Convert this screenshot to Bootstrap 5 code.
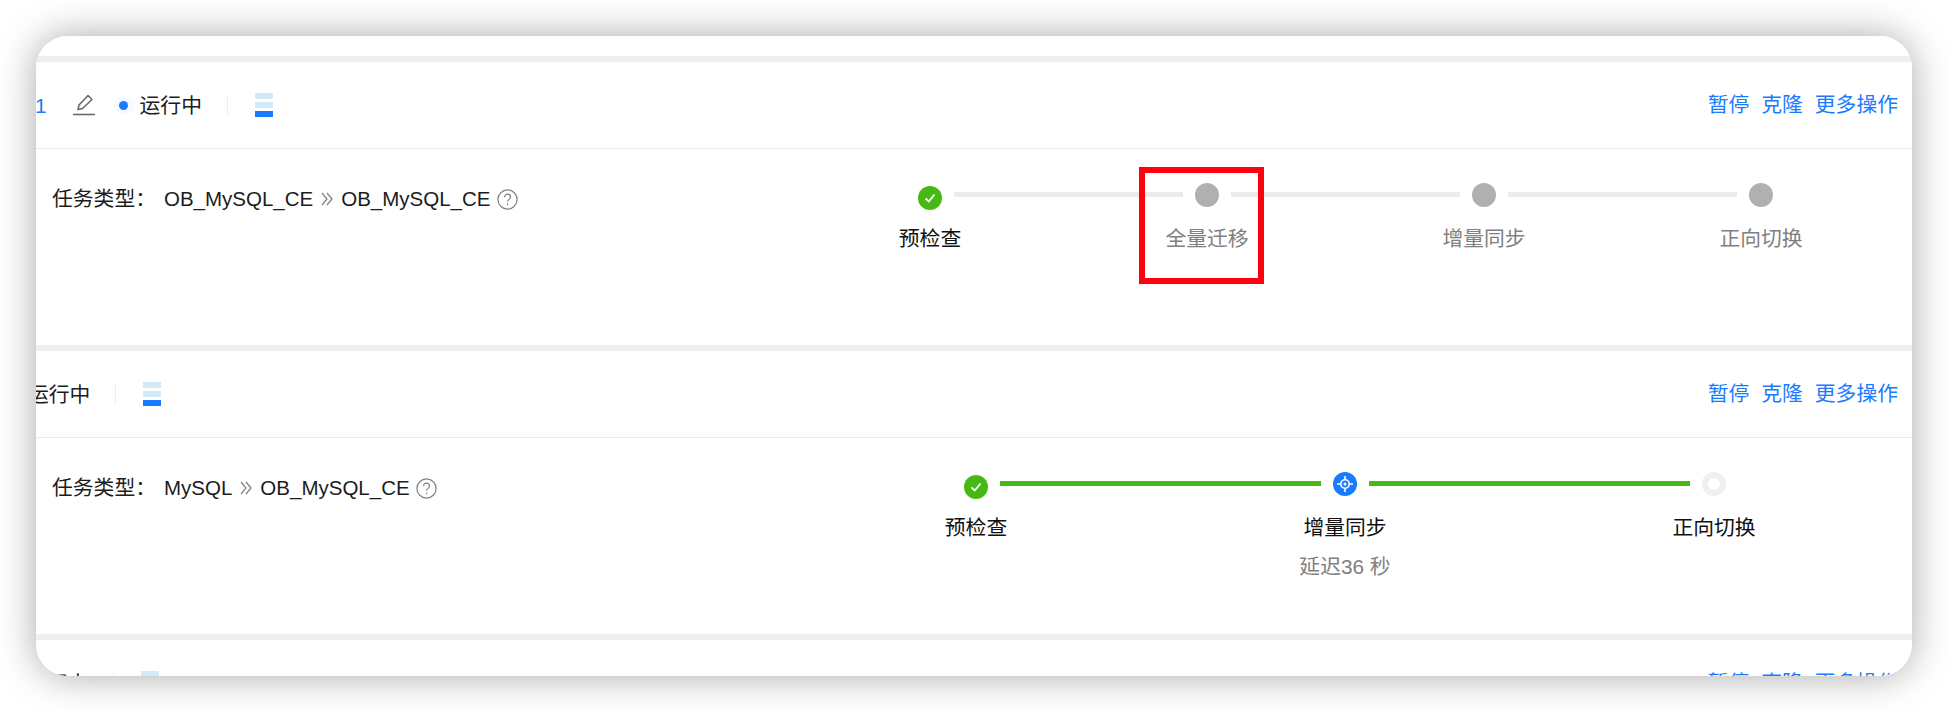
<!DOCTYPE html>
<html lang="zh-CN">
<head>
    <meta charset="UTF-8">
    <title>迁移任务列表</title>
    <meta name="viewport" content="width=device-width, initial-scale=1">
    <link href="https://cdn.jsdelivr.net/npm/bootstrap@5.3.0/dist/css/bootstrap.min.css" rel="stylesheet">
    <style>
        html, body { height: 100%; overflow: hidden; background: #fff; }
        body { font-family: "Liberation Sans", "Noto Sans CJK SC", sans-serif; font-size: 20.8px; line-height: 28px; color: #1c1c1c; padding: 36px 36px 0; }
        .shot-window { position: relative; height: 640px; padding-top: 20px; overflow: hidden; background: #fff; border-radius: 32px; }
        .shot-shadow { border-radius: 32px; box-shadow: 0 0 38px rgba(0,0,0,.34); }
        .job-band { height: 6px; background: #eeeff3; }
        .job-head { height: 87px; padding-right: 14px; border-bottom: 1px solid #ebebeb; }
        .job-body { height: 196px; }
        .job-info { padding: 36px 0 0 16px; }
        .job-label { width: 112px; }
        .db-name { font-size: 20.5px; }
        .head-text { padding-top: 2px; }
        .job-id { margin-left: -1px; margin-right: 25px; color: #1a7bff; }
        .edit-icon { width: 24px; height: 24px; margin-right: 18px; flex: none; }
        .status-dot { width: 20px; height: 20px; margin-right: 6px; border-radius: 50%; background: #f7faff; flex: none; }
        .status-dot::after { content: ""; display: block; width: 9px; height: 9px; margin: 5.5px; border-radius: 50%; background: #1a7bff; }
        .head-clip { margin-left: -8px; }
        .head-shift { margin-left: -10px; }
        .head-rule { width: 1px; height: 20px; margin: 0 27px 0 25px; background: #ececec; }
        .db-bars { width: 18px; gap: 3px; }
        .db-bars i { display: block; height: 6px; background: #d3e9f6; }
        .db-bars i:last-child { background: #1a7bff; }
        .job-actions { gap: 12px; color: #1a7bff; }
        .flow-mark { width: 12px; height: 14px; margin: 0 8px; flex: none; }
        .help-icon { width: 21px; height: 21px; margin-left: 6px; flex: none; }
        .steps-four { width: 855px; margin: 34px 139px 0 auto; }
        .steps-three { width: 762px; margin: 34px 186px 0 auto; }
        .step-node { width: 24px; flex: none; }
        .step-dot { width: 24px; height: 24px; border-radius: 50%; flex: none; }
        .step-done { background: #47b915; transform: translateY(3px); }
        .step-live { background: #1a7bff; }
        .step-wait { background: #b0b0b0; }
        .step-idle { border: 6px solid #f0f0f0; background: #fff; }
        .step-label { margin-top: 18px; color: #111; white-space: nowrap; }
        .step-muted { color: #808080; }
        .step-note { margin-top: 11px; color: #808080; white-space: nowrap; }
        .step-line { height: 5px; margin: 9px 12px 0; background: #ececec; }
        .step-line-ok { background: #47b915; }
        .red-frame { position: absolute; left: 1103px; top: 131px; width: 125px; height: 117px; border: 6px solid #ff0010; }
    </style>
</head>
<body>

<div class="shot-shadow">
<div class="shot-window">

    <div class="job-band"></div>
    <div class="job-head d-flex align-items-center">
        <span class="job-id head-text">1</span>
        <svg class="edit-icon" viewBox="0 0 24 24" fill="none" stroke="#666" stroke-width="1.5">
            <path d="M6 16.5 7 12 16 2.5 20 6.5 10.5 15.5Z" stroke-linejoin="round"/>
            <path d="M1 21.5H23"/>
        </svg>
        <span class="status-dot"></span>
        <span class="head-text">运行中</span>
        <span class="head-rule"></span>
        <span class="db-bars d-flex flex-column"><i></i><i></i><i></i></span>
        <span class="job-actions d-flex ms-auto"><span>暂停</span><span>克隆</span><span>更多操作</span></span>
    </div>
    <div class="job-body d-flex align-items-start">
        <div class="job-info d-flex">
            <span class="job-label">任务类型：</span>
            <span class="db-name">OB_MySQL_CE</span>
            <svg class="flow-mark align-self-center" viewBox="0 0 12 14" fill="none" stroke="#808080" stroke-width="1.2"><path d="M1 1l5 6-5 6M6 1l5 6-5 6"/></svg>
            <span class="db-name">OB_MySQL_CE</span>
            <svg class="help-icon align-self-center" viewBox="0 0 21 21" fill="none" stroke="#808080" stroke-width="1.2"><circle cx="10.5" cy="10.5" r="9.6"/><path d="M7.5 8.2c0-4 6-4 6 0 0 2.2-3 2.2-3 4.6"/><path d="M10.5 14.6v1.6"/></svg>
        </div>
        <div class="steps-four d-flex align-items-start">
            <div class="step-node d-flex flex-column align-items-center">
                <span class="step-dot step-done d-flex align-items-center justify-content-center">
                    <svg width="14" height="14" viewBox="0 0 14 14" fill="none" stroke="#fff" stroke-width="1.8"><path d="M2.5 7.5 5.8 10.5 11.5 3.5"/></svg>
                </span>
                <span class="step-label">预检查</span>
            </div>
            <div class="step-line flex-grow-1"></div>
            <div class="step-node d-flex flex-column align-items-center">
                <span class="step-dot step-wait"></span>
                <span class="step-label step-muted">全量迁移</span>
            </div>
            <div class="step-line flex-grow-1"></div>
            <div class="step-node d-flex flex-column align-items-center">
                <span class="step-dot step-wait"></span>
                <span class="step-label step-muted">增量同步</span>
            </div>
            <div class="step-line flex-grow-1"></div>
            <div class="step-node d-flex flex-column align-items-center">
                <span class="step-dot step-wait"></span>
                <span class="step-label step-muted">正向切换</span>
            </div>
        </div>
    </div>

    <div class="job-band"></div>
    <div class="job-head d-flex align-items-center">
        <span class="head-clip head-text">运行中</span>
        <span class="head-rule"></span>
        <span class="db-bars d-flex flex-column"><i></i><i></i><i></i></span>
        <span class="job-actions d-flex ms-auto"><span>暂停</span><span>克隆</span><span>更多操作</span></span>
    </div>
    <div class="job-body d-flex align-items-start">
        <div class="job-info d-flex">
            <span class="job-label">任务类型：</span>
            <span class="db-name">MySQL</span>
            <svg class="flow-mark align-self-center" viewBox="0 0 12 14" fill="none" stroke="#808080" stroke-width="1.2"><path d="M1 1l5 6-5 6M6 1l5 6-5 6"/></svg>
            <span class="db-name">OB_MySQL_CE</span>
            <svg class="help-icon align-self-center" viewBox="0 0 21 21" fill="none" stroke="#808080" stroke-width="1.2"><circle cx="10.5" cy="10.5" r="9.6"/><path d="M7.5 8.2c0-4 6-4 6 0 0 2.2-3 2.2-3 4.6"/><path d="M10.5 14.6v1.6"/></svg>
        </div>
        <div class="steps-three d-flex align-items-start">
            <div class="step-node d-flex flex-column align-items-center">
                <span class="step-dot step-done d-flex align-items-center justify-content-center">
                    <svg width="14" height="14" viewBox="0 0 14 14" fill="none" stroke="#fff" stroke-width="1.8"><path d="M2.5 7.5 5.8 10.5 11.5 3.5"/></svg>
                </span>
                <span class="step-label">预检查</span>
            </div>
            <div class="step-line step-line-ok flex-grow-1"></div>
            <div class="step-node d-flex flex-column align-items-center">
                <span class="step-dot step-live d-flex align-items-center justify-content-center">
                    <svg width="18" height="18" viewBox="0 0 18 18" fill="none" stroke="#fff"><circle cx="9" cy="9" r="4.2" stroke-width="1.6"/><circle cx="9" cy="9" r="1.5" fill="#fff" stroke="none"/><path d="M9 1v3.5M9 13.5V17M1 9h3.5M13.5 9H17" stroke-width="1.6"/></svg>
                </span>
                <span class="step-label">增量同步</span>
                <span class="step-note">延迟36 秒</span>
            </div>
            <div class="step-line step-line-ok flex-grow-1"></div>
            <div class="step-node d-flex flex-column align-items-center">
                <span class="step-dot step-idle"></span>
                <span class="step-label">正向切换</span>
            </div>
        </div>
    </div>

    <div class="job-band"></div>
    <div class="job-head d-flex align-items-center">
        <span class="head-shift head-text">运行中</span>
        <span class="head-rule"></span>
        <span class="db-bars d-flex flex-column"><i></i><i></i><i></i></span>
        <span class="job-actions d-flex ms-auto"><span>暂停</span><span>克隆</span><span>更多操作</span></span>
    </div>

    <div class="red-frame"></div>
</div>
</div>

<script src="https://cdn.jsdelivr.net/npm/bootstrap@5.3.0/dist/js/bootstrap.bundle.min.js"></script>
</body>
</html>
